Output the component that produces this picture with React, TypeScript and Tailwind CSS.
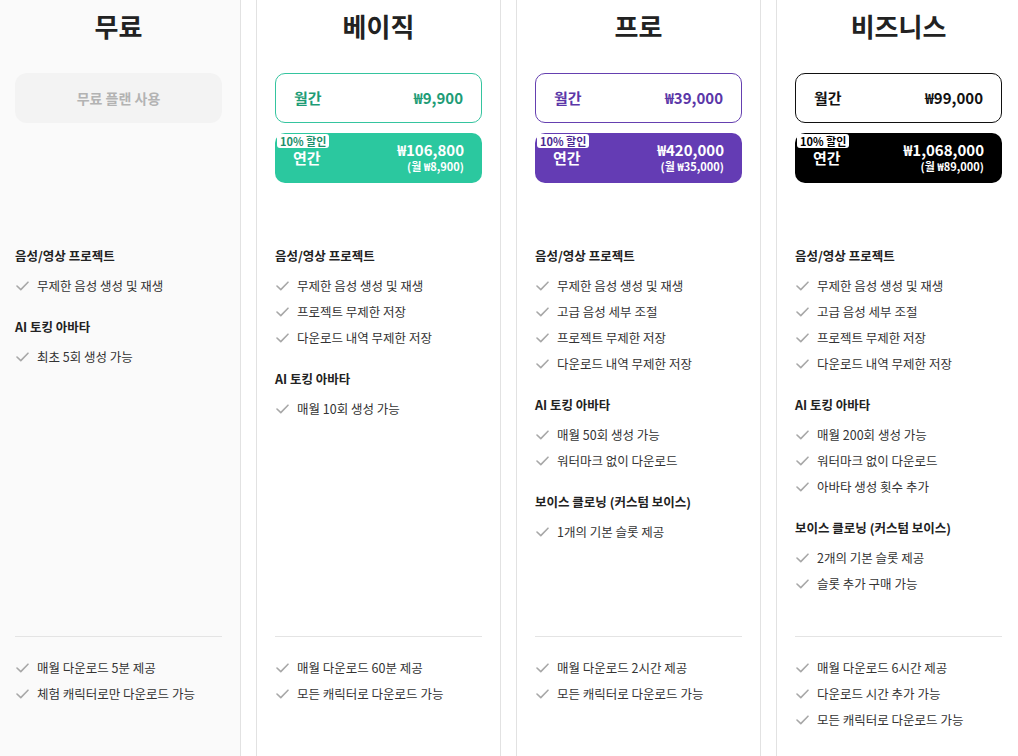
import React from "react";

type Group = { h: string; items: string[] };
type Plan = {
  name: string;
  free?: boolean;
  monthly?: string;
  annual?: string;
  perMonth?: string;
  theme?: "teal" | "purple" | "black";
  groups: Group[];
  bottom: string[];
};

const plans: Plan[] = [
  {
    name: "무료",
    free: true,
    groups: [
      { h: "음성/영상 프로젝트", items: ["무제한 음성 생성 및 재생"] },
      { h: "AI 토킹 아바타", items: ["최초 5회 생성 가능"] },
    ],
    bottom: ["매월 다운로드 5분 제공", "체험 캐릭터로만 다운로드 가능"],
  },
  {
    name: "베이직",
    monthly: "₩9,900",
    annual: "₩106,800",
    perMonth: "(월 ₩8,900)",
    theme: "teal",
    groups: [
      {
        h: "음성/영상 프로젝트",
        items: ["무제한 음성 생성 및 재생", "프로젝트 무제한 저장", "다운로드 내역 무제한 저장"],
      },
      { h: "AI 토킹 아바타", items: ["매월 10회 생성 가능"] },
    ],
    bottom: ["매월 다운로드 60분 제공", "모든 캐릭터로 다운로드 가능"],
  },
  {
    name: "프로",
    monthly: "₩39,000",
    annual: "₩420,000",
    perMonth: "(월 ₩35,000)",
    theme: "purple",
    groups: [
      {
        h: "음성/영상 프로젝트",
        items: ["무제한 음성 생성 및 재생", "고급 음성 세부 조절", "프로젝트 무제한 저장", "다운로드 내역 무제한 저장"],
      },
      { h: "AI 토킹 아바타", items: ["매월 50회 생성 가능", "워터마크 없이 다운로드"] },
      { h: "보이스 클로닝 (커스텀 보이스)", items: ["1개의 기본 슬롯 제공"] },
    ],
    bottom: ["매월 다운로드 2시간 제공", "모든 캐릭터로 다운로드 가능"],
  },
  {
    name: "비즈니스",
    monthly: "₩99,000",
    annual: "₩1,068,000",
    perMonth: "(월 ₩89,000)",
    theme: "black",
    groups: [
      {
        h: "음성/영상 프로젝트",
        items: ["무제한 음성 생성 및 재생", "고급 음성 세부 조절", "프로젝트 무제한 저장", "다운로드 내역 무제한 저장"],
      },
      { h: "AI 토킹 아바타", items: ["매월 200회 생성 가능", "워터마크 없이 다운로드", "아바타 생성 횟수 추가"] },
      { h: "보이스 클로닝 (커스텀 보이스)", items: ["2개의 기본 슬롯 제공", "슬롯 추가 구매 가능"] },
    ],
    bottom: ["매월 다운로드 6시간 제공", "다운로드 시간 추가 가능", "모든 캐릭터로 다운로드 가능"],
  },
];

const themes = {
  teal: {
    monthlyBox: "border-[#35c49f]",
    monthlyText: "text-[#1d9c76]",
    annualBox: "bg-[#2bc89f]",
    badgeText: "text-[#1d8f6c]",
  },
  purple: {
    monthlyBox: "border-[#6540b0]",
    monthlyText: "text-[#5a36a8]",
    annualBox: "bg-[#643cb4]",
    badgeText: "text-[#4b2a92]",
  },
  black: {
    monthlyBox: "border-[#111111]",
    monthlyText: "text-[#111111]",
    annualBox: "bg-[#000000]",
    badgeText: "text-[#000000]",
  },
};

function Check() {
  return (
    <svg width="13" height="10" viewBox="0 0 13 10" className="shrink-0">
      <polyline points="1,5 4.8,8.6 12,1.2" fill="none" stroke="#a8a8a8" strokeWidth="1.6" strokeLinecap="round" strokeLinejoin="round" />
    </svg>
  );
}

function Item({ text }: { text: string }) {
  return (
    <div className="h-[26px] flex items-center pl-[1px] gap-[8px] text-[12.5px] text-[#333333]">
      <Check />
      <span>{text}</span>
    </div>
  );
}

function PlanCard({ plan }: { plan: Plan }) {
  const t = plan.theme ? themes[plan.theme] : null;
  return (
    <div
      className={`w-[245px] shrink-0 h-[800px] border border-[#e2e2e2] px-[18px] flex flex-col ${
        plan.free ? "bg-[#fafafa]" : "bg-white"
      }`}
    >
      <div className="h-[50px] flex items-center justify-center text-[26px] font-bold text-[#222222]">{plan.name}</div>
      <div className="h-[110px] mt-[23px] flex flex-col gap-[10px]">
        {plan.free ? (
          <div className="h-[50px] rounded-[12px] bg-[#f3f3f3] flex items-center justify-center text-[14px] font-bold text-[#b3b3b3]">
            무료 플랜 사용
          </div>
        ) : (
          <>
            <div
              className={`h-[50px] rounded-[10px] border bg-white flex items-center justify-between px-[18px] ${t!.monthlyBox}`}
            >
              <span className={`text-[15px] font-bold ${t!.monthlyText}`}>월간</span>
              <span className={`text-[15px] font-bold ${t!.monthlyText}`}>{plan.monthly}</span>
            </div>
            <div className={`relative h-[51px] rounded-[10px] flex items-center justify-between px-[18px] text-white ${t!.annualBox}`}>
              <span
                className={`absolute left-[2px] top-[1px] h-[14px] px-[3px] rounded-[3px] bg-white text-[11px] font-bold leading-[14px] ${t!.badgeText}`}
              >
                10% 할인
              </span>
              <span className="text-[15px] font-bold">연간</span>
              <div className="flex flex-col items-end leading-none mt-[-2px]">
                <span className="text-[15px] font-bold leading-[18px]">{plan.annual}</span>
                <span className="text-[11px] font-bold leading-[14px]">{plan.perMonth}</span>
              </div>
            </div>
          </>
        )}
      </div>
      <div className="h-[453px] pt-[63px] flex flex-col">
        {plan.groups.map((g, gi) => (
          <div key={gi} className={gi > 0 ? "mt-[18px]" : ""}>
            <div className="h-[20px] flex items-center text-[12.5px] font-bold text-[#222222]">{g.h}</div>
            <div className="mt-[7px] flex flex-col">
              {g.items.map((it, ii) => (
                <Item key={ii} text={it} />
              ))}
            </div>
          </div>
        ))}
      </div>
      <div className="border-t border-[#e4e4e4] pt-[18px] flex flex-col">
        {plan.bottom.map((it, ii) => (
          <Item key={ii} text={it} />
        ))}
      </div>
    </div>
  );
}

export default function App() {
  return (
    <div
      className="w-[1018px] h-[756px] overflow-hidden bg-white"
      style={{ fontFamily: '"Noto Sans CJK KR", "Noto Sans", sans-serif' }}
    >
      <div className="flex gap-[15px] ml-[-4px] mt-[-1px]">
        {plans.map((p, i) => (
          <PlanCard key={i} plan={p} />
        ))}
      </div>
    </div>
  );
}
